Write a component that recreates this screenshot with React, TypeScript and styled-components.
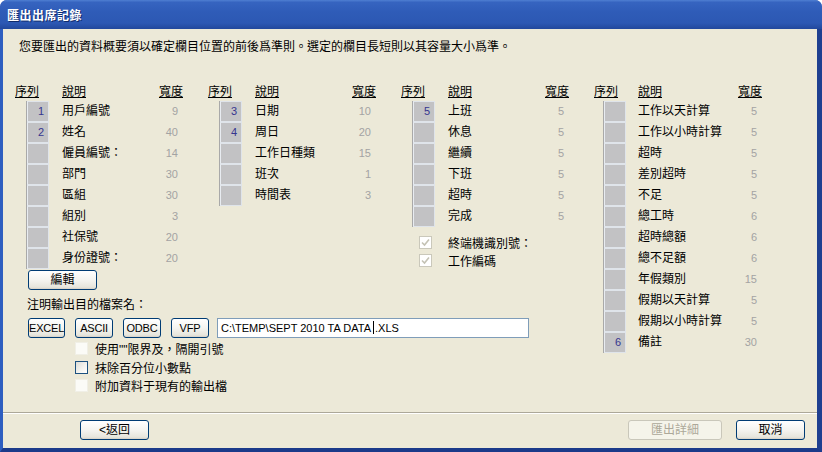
import React from 'react'
import styled, { createGlobalStyle } from 'styled-components'

const GlobalStyle = createGlobalStyle`
  html, body {
    margin: 0;
    padding: 0;
    background: #ffffff;
  }
  body {
    font-family: "Liberation Sans", "Noto Sans CJK TC", sans-serif;
    font-size: 12px;
    color: #000;
  }
`

const cjk = `"Liberation Sans", "Noto Sans CJK TC", sans-serif`

const Window = styled.div`
  width: 822px;
  height: 452px;
  display: flex;
  flex-direction: column;
  border-radius: 7px 7px 0 0;
  overflow: hidden;
  background: #2a55b0;
`

const TitleBar = styled.div`
  height: 29px;
  flex: none;
  display: flex;
  align-items: center;
  padding-left: 7px;
  box-sizing: border-box;
  background: linear-gradient(
    to bottom,
    #4f7fd2 0%,
    #3664c0 8%,
    #2f5cb8 40%,
    #2c58b3 80%,
    #22489c 100%
  );
  color: #fff;
  font-family: ${cjk};
  font-weight: bold;
  font-size: 12px;
  text-shadow: 1px 1px 0 #0f2a6a;
  letter-spacing: 0.5px;
`

const Frame = styled.div`
  flex: 1;
  display: flex;
  border-left: 3px solid #2e5ec0;
  border-right: 5px solid #1e3f90;
  border-bottom: 4px solid #1b3a8a;
  min-height: 0;
`

const Body = styled.div`
  flex: 1;
  display: flex;
  flex-direction: column;
  background: #ece9d8;
  padding-top: 10px;
`

const Intro = styled.div`
  padding-left: 16px;
  font-family: ${cjk};
  font-size: 12px;
  line-height: 16px;
`

const Main = styled.div`
  display: flex;
  margin-top: 30px;
  padding-left: 12px;
`

const LeftPane = styled.div`
  display: flex;
  flex-direction: column;
  width: 579px;
`

const GroupsRow = styled.div`
  display: flex;
  align-items: flex-start;
`

const Group = styled.div`
  width: 193px;
  display: flex;
  flex-direction: column;
`

const FieldGrid = styled.div<{ $seqW: number }>`
  display: grid;
  grid-template-columns: ${p => p.$seqW}px ${p => 143 - p.$seqW}px 25px;
  grid-auto-rows: 21px;
`

const HeaderRow = styled.div<{ $seqW: number }>`
  display: grid;
  grid-template-columns: ${p => p.$seqW}px ${p => 143 - p.$seqW}px 25px;
  height: 16px;
`

const HeaderCell = styled.div<{ $right?: boolean }>`
  height: 16px;
  line-height: 14px;
  font-family: ${cjk};
  font-size: 12px;
  text-decoration: underline;
  text-align: ${p => (p.$right ? 'right' : 'left')};
  align-self: start;
`

const SeqCell = styled.div<{ $pad: number }>`
  display: flex;
  padding-left: ${p => p.$pad}px;
`

const SeqBox = styled.div`
  width: 22px;
  height: 21px;
  box-sizing: border-box;
  background: #c2c2c4;
  border: 1px solid #dfe4ea;
  border-left-color: #e8ecf1;
  box-shadow: -1px 0 0 #a9a9a9;
  color: #35358f;
  font-size: 11px;
  text-align: right;
  padding-right: 4px;
  line-height: 19px;
`

const Desc = styled.div`
  font-family: ${cjk};
  font-size: 12px;
  line-height: 21px;
  white-space: nowrap;
`

const WidthVal = styled.div`
  color: #a3a3a3;
  font-size: 11px;
  line-height: 21px;
  text-align: right;
  padding-right: 5px;
`

const XpButton = styled.button<{ $w: number; $disabled?: boolean }>`
  width: ${p => p.$w}px;
  height: 20px;
  box-sizing: border-box;
  padding: 0;
  border: 1px solid ${p => (p.$disabled ? '#c9c7ba' : '#003c74')};
  border-radius: 3px;
  background: ${p =>
    p.$disabled
      ? '#f5f4ea'
      : 'linear-gradient(to bottom, #ffffff 0%, #f4f4f0 50%, #e6e5dc 90%, #d6d0c5 100%)'};
  color: ${p => (p.$disabled ? '#aca899' : '#000')};
  font-family: ${cjk};
  font-size: 12px;
  line-height: 18px;
  cursor: default;
`

const EditWrap = styled.div`
  padding-left: 13px;
  margin-top: 1px;
`

const CheckList = styled.div`
  display: flex;
  flex-direction: column;
  margin-top: 6px;
`

const CheckRow = styled.div<{ $indent: number; $h: number }>`
  display: flex;
  align-items: center;
  height: ${p => p.$h}px;
  padding-left: ${p => p.$indent}px;
`

const CheckBox = styled.span<{ $kind: 'on' | 'faint' | 'disabledChecked' }>`
  width: 13px;
  height: 13px;
  box-sizing: border-box;
  flex: none;
  display: flex;
  align-items: center;
  justify-content: center;
  border: 1px solid
    ${p => (p.$kind === 'on' ? '#1c5180' : p.$kind === 'faint' ? '#f0efe6' : '#cac8bb')};
  background: ${p =>
    p.$kind === 'on'
      ? 'linear-gradient(135deg, #dcdcd7 0%, #f4f4f0 60%, #ffffff 100%)'
      : p.$kind === 'faint'
      ? '#fbfbf7'
      : '#ffffff'};
`

const CheckLabel = styled.span<{ $gap: number }>`
  margin-left: ${p => p.$gap}px;
  font-family: ${cjk};
  font-size: 12px;
  white-space: nowrap;
`

const ExportSection = styled.div`
  display: flex;
  flex-direction: column;
  margin-top: 8px;
  padding-left: 12px;
`

const ExportLabel = styled.div`
  font-family: ${cjk};
  font-size: 12px;
  line-height: 14px;
`

const FormatRow = styled.div`
  display: flex;
  align-items: center;
  gap: 10px;
  margin-top: 6px;
  padding-left: 1px;
`

const FormatButton = styled(XpButton)`
  font-family: "Liberation Sans", sans-serif;
  font-size: 11px;
  letter-spacing: -0.2px;
`

const PathInput = styled.div`
  width: 312px;
  height: 20px;
  box-sizing: border-box;
  margin-left: -2px;
  border: 1px solid #7f9db9;
  background: #fff;
  font-family: "Liberation Sans", sans-serif;
  font-size: 11px;
  line-height: 18px;
  padding-left: 3px;
  white-space: nowrap;
`

const Caret = styled.span`
  display: inline-block;
  width: 1px;
  height: 13px;
  background: #000;
  vertical-align: -2px;
  margin: 0 1px 0 2px;
`

const ExportChecks = styled.div`
  display: flex;
  flex-direction: column;
  margin-top: 1px;
`

const Footer = styled.div`
  margin-top: auto;
  display: flex;
  flex-direction: column;
`

const Separator = styled.div`
  height: 1px;
  background: #aca899;
  border-bottom: 1px solid #ffffff;
`

const FooterButtons = styled.div`
  display: flex;
  align-items: center;
  justify-content: space-between;
  padding: 6px 12px 8px 77px;
`

const RightButtons = styled.div`
  display: flex;
  gap: 14px;
`

type Field = [number | null, string, number]

const group1: Field[] = [
  [1, '用戶編號', 9],
  [2, '姓名', 40],
  [null, '僱員編號：', 14],
  [null, '部門', 30],
  [null, '區組', 30],
  [null, '組別', 3],
  [null, '社保號', 20],
  [null, '身份證號：', 20],
]

const group2: Field[] = [
  [3, '日期', 10],
  [4, '周日', 20],
  [null, '工作日種類', 15],
  [null, '班次', 1],
  [null, '時間表', 3],
]

const group3: Field[] = [
  [5, '上班', 5],
  [null, '休息', 5],
  [null, '繼續', 5],
  [null, '下班', 5],
  [null, '超時', 5],
  [null, '完成', 5],
]

const group4: Field[] = [
  [null, '工作以天計算', 5],
  [null, '工作以小時計算', 5],
  [null, '超時', 5],
  [null, '差別超時', 5],
  [null, '不足', 5],
  [null, '總工時', 6],
  [null, '超時總額', 6],
  [null, '總不足額', 6],
  [null, '年假類別', 15],
  [null, '假期以天計算', 5],
  [null, '假期以小時計算', 5],
  [6, '備註', 30],
]

const Tick = () => (
  <svg width="9" height="9" viewBox="0 0 9 9">
    <path d="M1 4.5 L3.5 7 L8 1.5" fill="none" stroke="#c4c2b4" strokeWidth="1.6" />
  </svg>
)

const FieldTable = ({ fields, seqW = 47, pad = 12 }: { fields: Field[]; seqW?: number; pad?: number }) => (
  <>
    <HeaderRow $seqW={seqW}>
      <HeaderCell>序列</HeaderCell>
      <HeaderCell>說明</HeaderCell>
      <HeaderCell $right>寬度</HeaderCell>
    </HeaderRow>
    <FieldGrid $seqW={seqW}>
      {fields.map(([seq, label, width], i) => (
        <React.Fragment key={i}>
          <SeqCell $pad={pad}>
            <SeqBox>{seq ?? ''}</SeqBox>
          </SeqCell>
          <Desc>{label}</Desc>
          <WidthVal>{width}</WidthVal>
        </React.Fragment>
      ))}
    </FieldGrid>
  </>
)

export default function App() {
  return (
    <>
      <GlobalStyle />
      <Window>
        <TitleBar>匯出出席記錄</TitleBar>
        <Frame>
          <Body>
            <Intro>您要匯出的資料概要須以確定欄目位置的前後爲準則。選定的欄目長短則以其容量大小爲準。</Intro>
            <Main>
              <LeftPane>
                <GroupsRow>
                  <Group>
                    <FieldTable fields={group1} />
                    <EditWrap>
                      <XpButton $w={69}>編輯</XpButton>
                    </EditWrap>
                  </Group>
                  <Group>
                    <FieldTable fields={group2} />
                  </Group>
                  <Group>
                    <FieldTable fields={group3} />
                    <CheckList>
                      <CheckRow $indent={18} $h={18}>
                        <CheckBox $kind="disabledChecked">
                          <Tick />
                        </CheckBox>
                        <CheckLabel $gap={16}>終端機識別號：</CheckLabel>
                      </CheckRow>
                      <CheckRow $indent={18} $h={18}>
                        <CheckBox $kind="disabledChecked">
                          <Tick />
                        </CheckBox>
                        <CheckLabel $gap={16}>工作編碼</CheckLabel>
                      </CheckRow>
                    </CheckList>
                  </Group>
                </GroupsRow>
                <ExportSection>
                  <ExportLabel>注明輸出目的檔案名：</ExportLabel>
                  <FormatRow>
                    <FormatButton $w={37}>EXCEL</FormatButton>
                    <FormatButton $w={38}>ASCII</FormatButton>
                    <FormatButton $w={38}>ODBC</FormatButton>
                    <FormatButton $w={38}>VFP</FormatButton>
                    <PathInput>
                      C:\TEMP\SEPT 2010 TA DATA<Caret />.XLS
                    </PathInput>
                  </FormatRow>
                  <ExportChecks>
                    <CheckRow $indent={48} $h={19}>
                      <CheckBox $kind="faint" />
                      <CheckLabel $gap={7}>使用""限界及，隔開引號</CheckLabel>
                    </CheckRow>
                    <CheckRow $indent={48} $h={18}>
                      <CheckBox $kind="on" />
                      <CheckLabel $gap={7}>抹除百分位小數點</CheckLabel>
                    </CheckRow>
                    <CheckRow $indent={48} $h={18}>
                      <CheckBox $kind="faint" />
                      <CheckLabel $gap={7}>附加資料于現有的輸出檔</CheckLabel>
                    </CheckRow>
                  </ExportChecks>
                </ExportSection>
              </LeftPane>
              <Group>
                <FieldTable fields={group4} seqW={44} pad={10} />
              </Group>
            </Main>
            <Footer>
              <Separator />
              <FooterButtons>
                <XpButton $w={69}>&lt;返回</XpButton>
                <RightButtons>
                  <XpButton $w={94} $disabled>
                    匯出詳細
                  </XpButton>
                  <XpButton $w={69}>取消</XpButton>
                </RightButtons>
              </FooterButtons>
            </Footer>
          </Body>
        </Frame>
      </Window>
    </>
  )
}
